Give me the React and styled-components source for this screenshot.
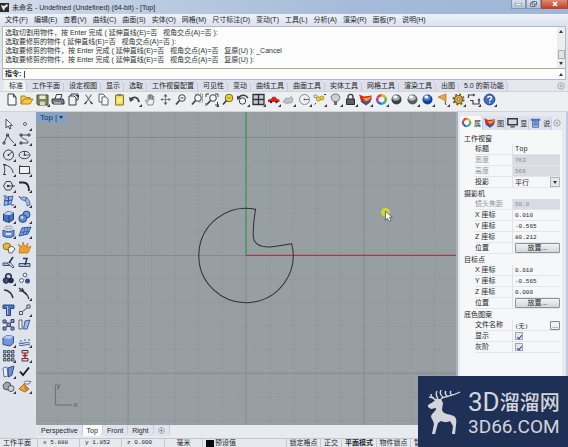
import React from "react";
import styled, { createGlobalStyle, css } from "styled-components";

const GlobalStyle = createGlobalStyle`
  * { box-sizing: border-box; }
  html, body { margin: 0; height: 100%; overflow: hidden; }
  body, button, input, select {
    font-family: "Liberation Sans", "Noto Sans CJK SC", sans-serif;
    font-size: 7px;
    color: #23262c;
  }
  button, input, select { margin: 0; padding: 0; border: 0; background: none; border-radius: 0; outline: 0; }
  svg { display: block; }
`;

const mono = css`
  font-family: "Liberation Mono", "Noto Sans CJK SC", monospace;
`;

const Window = styled.div`
  position: relative;
  height: 100vh;
  display: flex;
  flex-direction: column;
  background: #dfe4ec;
  overflow: hidden;
`;

/* title bar */
const TitleBar = styled.header`
  display: flex;
  flex: none;
  height: 14px;
  background: linear-gradient(90deg, #d3dcea 0, #b9c9e0 30%, #a5bbd9 62%, #9fb5d6 100%);
`;
const Title = styled.h1`
  display: flex;
  align-items: center;
  gap: 2px;
  flex: 1;
  margin: 0;
  font-size: 7px;
  line-height: 13px;
  font-weight: 400;
  white-space: pre;
`;
const WindowButton = styled.button`
  width: ${(p) => (p.$close ? 27 : 15)}px;
  height: 9px;
  display: grid;
  place-items: center;
  border: 1px solid ${(p) => (p.$close ? "#a4503f" : "#8595ae")};
  border-top: 0;
  background: ${(p) => (p.$close ? "linear-gradient(#e08a72, #c5402a)" : "linear-gradient(#d6e0ee, #b2c2d8)")};
`;

/* menu */
const MenuBar = styled.nav`
  display: flex;
  flex: none;
  gap: 6px;
  height: 12px;
  padding: 0 5px;
  background: linear-gradient(#eef1f7, #dbe1ee);
`;
const MenuItem = styled.button`
  line-height: 12px;
  white-space: nowrap;
`;

/* command area */
const CommandArea = styled.section`
  flex: none;
  margin: 0 2px;
  border: 1px solid #b4bac4;
  background: #fcfdfc;
`;
const History = styled.div`
  display: flex;
  height: 42px;
  border-bottom: 1px solid #a8aa92;
`;
const Lines = styled.ol`
  flex: 1;
  margin: 0;
  padding: 1px 0 0 2px;
  list-style: none;
  line-height: 9px;
  white-space: pre;
  color: #303336;
`;
const Scrollbar = styled.div`
  width: 8px;
  display: flex;
  flex-direction: column;
  justify-content: space-between;
  align-items: center;
  background: #eceeee;
`;
const ScrollButton = styled.button`
  display: grid;
  place-items: center;
  width: 8px;
  height: 9px;
`;
const Thumb = styled.div`
  width: 7px;
  height: 9px;
  margin-top: auto;
  border: 1px solid #aab0b4;
  background: #e1e4e6;
`;
const Prompt = styled.label`
  display: flex;
  align-items: center;
  height: 10px;
  padding-left: 2px;
  line-height: 10px;
  font-weight: 700;
`;
const Caret = styled.i`
  width: 1px;
  height: 7px;
  margin-left: 3px;
  background: #444;
`;
const PromptInput = styled.input`
  flex: 1;
  min-width: 0;
  height: 9px;
`;

/* toolbar */
const ToolTabs = styled.div`
  display: flex;
  flex: none;
  align-items: flex-end;
  height: 12px;
  padding: 0 2px 0 4px;
  border-bottom: 1px solid #d0d3dc;
  background: #e4e7ee;
`;
const ToolTab = styled.button`
  height: 11px;
  padding: 0 3px 0 5px;
  line-height: 11px;
  white-space: nowrap;
  border-right: 1px solid #c6cad6;
  border-radius: 2px 5px 0 0;
  background: ${(p) => (p.$active ? "#f2f3f4" : "#dde0ea")};
`;
const TabOptions = styled.button`
  margin-left: auto;
  width: 10px;
  height: 10px;
  display: grid;
  place-items: center;
`;
const Toolbar = styled.div`
  flex: none;
  height: 20px;
  padding: 1px 5px;
  border-bottom: 1px solid #cfd3da;
  background: #eeeff1;
`;
const ToolRow = styled.div`
  display: flex;
  justify-content: space-between;
  max-width: 492px;
`;
const IconButton = styled.button`
  width: 14px;
  height: 14px;
`;

/* work area */
const Body = styled.div`
  display: flex;
  flex: 1;
  min-height: 0;
`;
const Palette = styled.div`
  display: grid;
  flex: none;
  grid-template-columns: 14px 14px;
  column-gap: 2px;
  align-content: space-between;
  max-height: 282px;
  width: 36px;
  padding: 5px 3px 0 2px;
`;
const Center = styled.main`
  display: flex;
  flex: 1;
  min-width: 0;
  flex-direction: column;
`;
const Viewport = styled.div`
  position: relative;
  flex: 1;
  min-height: 0;
  overflow: hidden;
  background: #989fa3;
`;
const ViewLabel = styled.button`
  position: absolute;
  top: 0;
  left: 0;
  display: flex;
  align-items: center;
  gap: 2px;
  height: 11px;
  padding: 0 3px 0 4px;
  font-size: 8px;
  color: #1c3458;
  background: #83a1c4;
`;
const Scene = styled.svg`
  width: 100%;
  height: 100%;
`;
const ViewTabs = styled.div`
  display: flex;
  flex: none;
  align-items: flex-start;
  height: 13px;
  padding-left: 1px;
  background: #e7eaf0;
`;
const ViewTab = styled.button`
  height: 11px;
  padding: 0 4px;
  line-height: 11px;
  border-right: 1px solid #c9cedc;
  border-radius: 0 0 4px 2px;
  background: ${(p) => (p.$active ? "#fbfcfc" : "#e0e3ed")};
`;

/* properties panel */
const Panel = styled.aside`
  flex: none;
  width: 112px;
  padding: 4px 4px 0 2px;
  border-left: 2px solid #a9b3c0;
  border-right: 2px solid #bccbe0;
  background: #e6e9ef;
`;
const PanelTabs = styled.div`
  display: flex;
  align-items: center;
  height: 14px;
`;
const PanelTab = styled.button`
  display: flex;
  align-items: center;
  gap: 1px;
  height: 14px;
  width: 24px;
  padding-left: 1px;
  border-right: 1px solid #c9cedc;
  border-radius: 2px 4px 0 0;
  background: ${(p) => (p.$active ? "#f7f8f8" : "#dde1ea")};
`;
const Sheet = styled.div`
  height: calc(100% - 14px);
  padding: 3px 2px 0 4px;
  background: #f6f7f8;
`;
const Group = styled.fieldset`
  min-width: 0;
  margin: 0;
  padding: 0;
  border: 0;
`;
const GroupTitle = styled.legend`
  height: 11px;
  padding: 0;
  line-height: 11px;
`;
const Row = styled.label`
  display: grid;
  grid-template-columns: 37px 1fr;
  height: 11px;
  margin-left: 11px;
  line-height: 10px;
  border-bottom: 1px solid #e3e5e8;
  color: ${(p) => (p.$muted ? "#93979e" : "#23262c")};
`;
const Value = styled.span`
  display: flex;
  align-items: center;
  min-width: 0;
  padding-left: 2px;
  border-left: 1px solid #e0e2e6;
  background: ${(p) => (p.$muted ? "#d9dbe3" : "transparent")};
`;
const Field = styled.input`
  ${mono}
  flex: 1;
  width: 0;
  height: 10px;
  font-size: ${(p) => (p.$wide ? 7 : 6)}px;
  &:disabled { color: #858991; }
`;
const Select = styled.select`
  appearance: none;
  flex: 1;
  height: 10px;
`;
const SelectArrow = styled.span`
  display: grid;
  place-items: center;
  width: 10px;
  height: 10px;
  border: 1px solid #b3b7bc;
  background: #e6e7e9;
`;
const PlaceButton = styled.button`
  flex: 1;
  height: 10px;
  line-height: 8px;
  border: 1px solid #8f9398;
  border-radius: 1px;
  background: linear-gradient(#f2f3f3, #d3d5d7);
`;
const MoreButton = styled.button`
  width: 10px;
  height: 9px;
  line-height: 5px;
  border: 1px solid #80858a;
  border-radius: 1px;
  background: #f0f1f2;
`;
const Check = styled.input`
  appearance: none;
  width: 8px;
  height: 8px;
  display: grid;
  place-items: center;
  border: 1px solid #a0a5b4;
  background: #e4e6f0;
  &:checked::after {
    content: "";
    width: 2px;
    height: 4px;
    border: solid #3c4480;
    border-width: 0 1px 1px 0;
    transform: rotate(40deg);
  }
`;

/* status bar */
const StatusBar = styled.footer`
  display: grid;
  flex: none;
  grid-template-columns: 38px 42px 42px 43px 38px 84px 34px 21px 35px 34px 1fr;
  height: 9px;
  overflow: hidden;
  border-top: 1px solid #c3c8d0;
  background: #e6e9ee;
  white-space: nowrap;
`;
const Status = styled.div`
  display: flex;
  align-items: center;
  justify-content: ${(p) => (p.$indent ? "flex-start" : "center")};
  gap: 1px;
  padding-left: ${(p) => p.$indent || 0}px;
  line-height: 8px;
  font-weight: ${(p) => (p.$bold ? 700 : 400)};
  border-right: 1px solid #c4c9d2;
`;
const Coordinate = styled.span`
  ${mono}
  font-size: 6px;
`;
const Swatch = styled.i`
  width: 8px;
  height: 7px;
  background: #08090a;
`;

/* brand badge */
const Badge = styled.div`
  position: absolute;
  right: 0;
  bottom: 0;
  display: flex;
  gap: 7px;
  width: 150px;
  height: 71px;
  padding: 14px 8px 0 9px;
  color: #d3d5da;
  background: #1f3057;
`;
const BrandText = styled.div`
  display: flex;
  flex-direction: column;
  gap: 5px;
  white-space: nowrap;
`;
const BrandName = styled.div`
  display: flex;
  align-items: center;
  height: 24px;
  font: 400 26px/24px Roboto, sans-serif;
`;
const BrandHan = styled.span`
  font: 500 20px/24px "Noto Sans CJK SC", sans-serif;
`;
const BrandSite = styled.div`
  font: 400 19px/16px Roboto, sans-serif;
`;

const K = "#3b3f45";
const B = "#3d63b4";
const L = "#9fb8e6";
const Y = "#e9b93a";

const magnifier = (
  <>
    <circle cx="8" cy="5" r="3.3" fill="#f4f6f8" stroke={K} />
    <path d="M5.5 7.5 2 11.5" stroke={K} strokeWidth="1.6" />
  </>
);

const sphere = (dark, mid) => (
  <>
    <circle cx="6.5" cy="6.5" r="5" fill={dark} />
    <ellipse cx="6" cy="5" rx="3.7" ry="2.8" fill={mid} />
    <ellipse cx="5.4" cy="4" rx="2" ry="1.4" fill="#fff" />
  </>
);

const colorWheel = (
  <g strokeWidth="2.4" fill="none">
    <path d="M6.5 2.2A4.3 4.3 0 0 1 10.2 4.3" stroke="#e6b020" />
    <path d="M10.2 4.3A4.3 4.3 0 0 1 10.2 8.6" stroke="#67b43c" />
    <path d="M10.2 8.6A4.3 4.3 0 0 1 6.5 10.8" stroke="#2ba8b0" />
    <path d="M6.5 10.8A4.3 4.3 0 0 1 2.8 8.6" stroke="#3458c8" />
    <path d="M2.8 8.6A4.3 4.3 0 0 1 2.8 4.3" stroke="#a8409c" />
    <path d="M2.8 4.3A4.3 4.3 0 0 1 6.5 2.2" stroke="#d8402c" />
  </g>
);

const layers = (
  <>
    <path d="M1 3.500 6 7 13 5 11 9.500 7 12.500 2 9Z" fill="#31569f" />
    <path d="M0 1.500 5 3.500 13 2.500 11.500 7 7 10 2 7Z" fill="#d5301e" />
    <path d="M4 5 8 5 12 3.500 10.500 6.500 7 8.500Z" fill="#f0a13a" />
  </>
);

const icons = {
  new: <path d="M3 1H8.5L11 4V12H3Z M8.5 1V4H11" fill="#fbfcfc" stroke={K} />,
  open: (
    <>
      <path d="M1 11V3H5L6 4.5H10V6" fill="#f3cf5c" stroke="#aa7c1c" />
      <path d="M1 11 4 6H13L10 11Z" fill="#f8c93a" stroke="#b4821c" />
    </>
  ),
  save: (
    <>
      <path d="M1 2H12V12H2L1 11Z" fill="#7f8458" stroke="#4d5136" />
      <path d="M3.5 2.5H9.5V6H3.5Z" fill="#e9ecd9" />
      <path d="M4 8.5H9V12H4Z" fill="#d2d7d9" />
    </>
  ),
  print: (
    <>
      <path d="M4 6 5.5 1.5H11L9.5 6" fill="#f5f6f6" stroke={K} />
      <path d="M1 6H12L13 8V11H2L1 9Z" fill="#777c82" stroke="#33373c" />
      <path d="M3 10H10" stroke="#dfe2e4" />
    </>
  ),
  exportDoc: (
    <>
      <path d="M2 3H7L9 5V12H2Z" fill="#f2f3f4" stroke={K} />
      <path d="M4 3V1H11V7H9" fill="none" stroke={K} />
      <path d="M8 2H12V5Z" fill={K} />
    </>
  ),
  cut: (
    <>
      <path d="M3.5 1.5 9 9.5M9.5 1.5 4 9.5" stroke="#70767e" strokeWidth="1.2" />
      <path d="M2.5 11 4.5 9M8.5 9 10.500 11" stroke={K} strokeWidth="1.600" />
    </>
  ),
  copy: (
    <>
      <path d="M2 1H6L8 3V9H2Z" fill="#f7f8f8" stroke="#62666c" />
      <path d="M5 4H9L11 6V12H5Z" fill="#f7f8f8" stroke="#62666c" />
    </>
  ),
  paste: (
    <>
      <path d="M2.5 2H10.5V12H2.5Z" fill="#f1dc56" stroke="#85741c" />
      <path d="M4.5 1H8.5V3H4.5Z" fill="#74787c" />
      <path d="M4.5 5H8.5V10H4.5Z" fill="#f8ec9c" />
    </>
  ),
  undo: (
    <>
      <path d="M3 6C6 3 10 4 11 9" fill="none" stroke={K} strokeWidth="1.8" />
      <path d="M1 4 2 9 6 6.5Z" fill={K} />
    </>
  ),
  pan: <path d="M4 12 1.5 7.5 2.5 7 4 8.5V2.5H5.3V6.5 1.5H6.8V6.5 2H8.3V7 3.5H9.8V9L8.5 12Z" fill="#f0f1f2" stroke="#696e74" strokeWidth=".8" />,
  orbit: (
    <>
      <path d="M6.5 1V12M2 6.5H11" stroke="#7b8086" />
      <path d="M4.5 3.5 6.5 1 8.5 3.5ZM4.5 9.5 6.5 12 8.5 9.5ZM3.5 5 1.5 6.5 3.5 8ZM9.5 5 12 6.5 9.5 8Z" fill="#5a5f66" />
    </>
  ),
  zoom: <>{magnifier}<path d="M6.5 5H9.5" stroke={K} /></>,
  zoomWindow: <>{magnifier}<path d="M5 1H12.5V9H9" fill="none" stroke="#74797f" strokeDasharray="1.5 1" /></>,
  zoomExtents: <>{magnifier}<path d="M1 4V1H4M10 1H13V4M1 10V13M10 12H12.5V9" fill="none" stroke={K} /></>,
  zoomSelected: (
    <>
      <circle cx="8" cy="5" r="3.8" fill="#f0d438" stroke="#6e672c" />
      <path d="M5.5 7.5 2 11.5" stroke={K} strokeWidth="1.7" />
      <path d="M6 5H10" stroke="#a08818" />
    </>
  ),
  undoView: (
    <>
      <circle cx="6.5" cy="8" r="3.2" fill="#f5f6f7" stroke={K} />
      <path d="M3 4C6 1 10 2 12 5" fill="none" stroke={K} strokeWidth="1.4" />
      <path d="M1 2.5V7L5 5Z" fill={K} />
    </>
  ),
  fourView: (
    <>
      <path d="M1 1.5H12V11.5H1Z" fill="#c7cbcf" stroke="#303439" strokeWidth="1.3" />
      <path d="M6.5 1V12M1 6.5H12" stroke="#303439" strokeWidth="1.3" />
    </>
  ),
  car: (
    <>
      <path d="M1 6.5 4 6 5.5 3.8H8.5L10 6 12.5 6.5V9H1Z" fill="#cf2a22" />
      <circle cx="4" cy="9" r="1.2" fill="#501c1c" />
      <circle cx="9.5" cy="9" r="1.2" fill="#501c1c" />
    </>
  ),
  cloud: <path d="M1 9 4 5 7 5.5 9 3.5 11 6 10 9.5 5 10.5Z" fill="#bfc2c7" stroke="#8d9197" strokeWidth=".7" />,
  cplane: (
    <>
      <circle cx="6.5" cy="6.5" r="5" fill="#f0f1f2" stroke="#85898e" />
      <path d="M6.5 6.5H11" stroke="#686d73" />
      <circle cx="6.5" cy="6.5" r="1" fill="#6c7177" />
    </>
  ),
  points: (
    <>
      <path d="M1 2H4V4.5H1Z" fill="none" stroke="#7c8086" strokeWidth=".7" />
      <circle cx="5.5" cy="6" r="2.2" fill="#f0cd35" stroke="#9a8425" strokeWidth=".7" />
      <circle cx="9" cy="5" r="2" fill="#f0cd35" stroke="#9a8425" strokeWidth=".7" />
      <path d="M1.5 11.5 3 10M11 1.5H13" stroke={K} />
    </>
  ),
  bulb: (
    <>
      <path d="M4.5 8.5C0 4 3 1 6.5 1S13 4 8.5 8.5Z" fill="#cdd1d5" stroke="#6c7177" />
      <path d="M5 9H8V12H5Z" fill="#666b71" />
    </>
  ),
  lock: (
    <>
      <path d="M4 6V4C4 .5 9 .5 9 4V6" fill="none" stroke="#3e4247" strokeWidth="1.4" />
      <path d="M2.5 6H10.5V11.5H2.5Z" fill="#5c6167" stroke="#2b2e32" />
    </>
  ),
  layers,
  colorWheel,
  shade: sphere("#3c3f43", "#a7abb0"),
  render: sphere("#575b60", "#b8bbc0"),
  renderBlue: sphere("#153f94", "#4a7ed3"),
  spotlight: (
    <>
      <path d="M2 4 10 1V9L8 7Z" fill="#eda648" stroke="#ab6e28" strokeWidth=".7" />
      <path d="M9 9 10 12" stroke={K} />
    </>
  ),
  gear: (
    <>
      <circle cx="6.5" cy="6.5" r="4" fill="#e0b64a" stroke="#75591c" strokeWidth="1.2" />
      <circle cx="6.5" cy="6.5" r="5.3" fill="none" stroke="#75591c" strokeWidth="1.5" strokeDasharray="2 2.16" />
      <circle cx="6.5" cy="6.5" r="1.5" fill="#f1f1ec" stroke="#75591c" />
    </>
  ),
  dimension: (
    <>
      <path d="M1.5 5V2H7M3 7.5H6V11H12V6.5" fill="none" stroke={K} strokeWidth="1.2" />
      <path d="M6 .5 8.5 2 6 3.5ZM10.5 7.5 12 5 13.5 7.5Z" fill={K} />
    </>
  ),
  help: (
    <>
      <circle cx="6.5" cy="6.5" r="5.4" fill="#426bc2" stroke="#25417e" />
      <path d="M4.7 5C4.7 2.8 8.5 2.8 8.5 5 8.5 6.5 6.6 6.2 6.6 8" fill="none" stroke="#fff" strokeWidth="1.4" />
      <path d="M6 9H7.3V10.3H6Z" fill="#fff" />
    </>
  ),
  pointer: <path d="M4 2V11L6.2 9 7.8 12 9 11.3 7.6 8.5H10.3Z" fill="#f7f8fa" stroke={K} strokeWidth=".9" />,
  point: <circle cx="7" cy="7" r="1.5" fill="#f7f8fa" stroke={K} strokeWidth=".8" />,
  polyline: <path d="M2 11 5.500 3 9 8 12 11M1 10H3V12H1ZM4.500 2H6.500V4H4.500Z" fill="none" stroke={K} strokeWidth=".9" />,
  curve: <path d="M3 3H11M3 3C3 8 10 6 10 11M2 11H10M2 2H4V4H2ZM10 2H12V4H10ZM2 10H4V12H2Z" fill="none" stroke={K} strokeWidth=".9" />,
  circle: (
    <>
      <circle cx="6.5" cy="7" r="5" fill="none" stroke={K} />
      <path d="M6.5 7 10.5 3.5" stroke={K} />
      <circle cx="6.5" cy="7" r="1" fill={K} />
    </>
  ),
  ellipse: (
    <>
      <ellipse cx="6.5" cy="7" rx="5.5" ry="3.7" fill="none" stroke={K} />
      <path d="M6.5 3V7H11" stroke={K} strokeWidth=".8" />
      <circle cx="6.5" cy="7" r="1" fill={K} />
    </>
  ),
  arc: <path d="M2 11.500C3 8 3 5 2 2C7 2 11 6 11 10M1 1.5H4M1 11.5H4" fill="none" stroke={K} />,
  rectangle: <path d="M1.5 3.5H11.5V10.5H1.5ZM1 3H3M10.5 10H12.5" fill="#edf0f4" stroke={K} />,
  polygon: (
    <>
      <path d="M4 2.5H8.5L11 7 8.5 11H4L1.5 7Z" fill="none" stroke={K} />
      <path d="M6 7H13" stroke={K} />
      <circle cx="6" cy="7" r="1.3" fill={K} />
    </>
  ),
  fillet: <path d="M1 3.5H5C9 3.5 11 6 11 12" fill="none" stroke="#26292e" strokeWidth="1.8" />,
  surface: <><path d="M3 3.5 11 2 9 10 2 11.5Z" fill={L} stroke={B} /><path d="M6.5 2.5 6 11M2.5 7 10 6M1.5 2H4.5M9 11H12" stroke="#27427f" /></>,
  patch: <><path d="M2 4C8 1 12 5 12 11L9 12C9 8 7 6 4 6Z" fill={L} stroke="#5474aa" /><path d="M2 4 1 2M9 3 7 7" stroke="#51565e" /></>,
  box: <><path d="M1.5 4 6 1.5 11.5 3V9.5L7 12.5 1.5 10.5Z" fill="#4a6fbd" stroke="#203f80" /><path d="M1.5 4 6 1.5 11.5 3 7 5.3Z" fill="#c5d5f1" /><path d="M7 5.3V12" stroke="#203f80" /></>,
  union: <><circle cx="8.5" cy="4.5" r="3.5" fill="#7898d8" stroke="#294a90" /><circle cx="4.8" cy="8.5" r="3.9" fill="#6488d0" stroke="#294a90" /><circle cx="4" cy="7.5" r="1.4" fill="#c8d8f4" /></>,
  extrude: <><ellipse cx="6.5" cy="2.5" rx="4" ry="1.4" fill="none" stroke="#9298a2" /><path d="M1 5C4 7 9 7 12 5V11C9 13 4 13 1 11Z" fill="#6f92d4" stroke="#34549b" /><path d="M4 8H9V10H4Z" fill="#d9e4f7" /></>,
  mesh: <><path d="M4 3 13 2 10 9 1 11Z" fill="#86a3df" stroke="#30549f" /><path d="M7 3 5 10M10 2.5 8 9.5M2.5 7.5 11.5 6" stroke="#30549f" strokeWidth=".8" /></>,
  join: <><path d="M1 4 4 2 8 3 8 6 6 9 2 8Z" fill={Y} stroke="#94711f" /><path d="M6 7 10 5 13 8 10 12H7Z" fill="#f1f2f1" stroke="#6b6048" /></>,
  explode: <path d="M1 12 2 6 0 3 4 6 5 1 7 6 10 2 9 7 13 5 10 12Z" fill="#f0a12c" stroke="#b56b18" strokeWidth=".7" />,
  trim: <><path d="M1 7H8V9.500H1Z" fill="#a9b9d8" stroke="#3d5375" /><path d="M5 7 11 12 12 11 8 6" fill="#dce3ef" stroke="#3d5375" /><path d="M11 1 7 7" stroke="#273450" strokeWidth="1.600" /></>,
  split: <><path d="M1 7.500H12V10.500H1Z" fill="#a9b9d8" stroke="#3d5375" /><path d="M5 2.500H9L7 9" fill="none" stroke="#273450" strokeWidth="1.500" /></>,
  group: <><circle cx="6.5" cy="4.5" r="2.8" fill="#c4cce0" stroke="#27334f" strokeWidth="1.5" /><circle cx="4" cy="8.5" r="2.8" fill="#404e78" stroke="#1b2440" /><circle cx="9" cy="8.5" r="2.8" fill="#232c4c" /></>,
  ungroup: <><circle cx="7" cy="3" r="1.9" fill="#f2f4f8" stroke="#55617d" /><circle cx="3.5" cy="8.5" r="2" fill="#f2f4f8" stroke="#55617d" /><circle cx="9.500" cy="9" r="2.500" fill="#394d8c" /></>,
  extend: <path d="M2 3C6 3 10 6 11 11" fill="none" stroke="#2b2e33" strokeWidth="1.5" />,
  blend: <path d="M1 4C6 3 9 6 11 12M4 1 6 5M1 1 9 8" fill="none" stroke="#2b2e33" strokeWidth="1.2" />,
  text: <><path d="M1 2H12V5.5H8.5V12.5H4.5V5.5H1Z" fill="#5173b7" stroke="#294a87" /><path d="M5.5 3V11.5" stroke="#a9c0e9" /></>,
  move: <path d="M1.5 8.5H4.5V11.5H1.5ZM9 2H12V5H9ZM4.5 8.5 9 5" fill="#eceff4" stroke="#474c54" />,
  array: <path d="M1 2H4V5H1ZM9 1.5H12V4.5H9ZM1 9H4V12H1ZM9 9H12V12H9ZM5 5H8.5V8.5H5ZM4 4 5 5M8.5 5 10 4M4 9 5 8.5M8.5 8.5 9 9" fill="#859ac8" stroke="#37466a" />,
  twist: <><path d="M1 2H4V11H1Z" fill="#f1f3f6" stroke="#5a6270" /><path d="M7 3 12 2 9 11H5.5Z" fill="#a6bbe4" stroke="#3e5b9b" /></>,
  solid: <><path d="M1 4 5 1.5 11.5 2.5V9L8 12 1 10.5Z" fill="#7396db" stroke="#315095" /><path d="M1 4 5 1.5 11.5 2.5 8 5Z" fill="#bccff1" /></>,
  contour: <path d="M1 9C4 11 7 7 12 9M1 11C5 13 8 9 12 11M3 8V6M7 7V5M11 7V5" fill="none" stroke="#506fa9" strokeWidth="1.2" />,
  gridArray: <path d="M1.5 1.5H4V4H1.5ZM5.5 1.5H8V4H5.5ZM9.5 1.5H12V4H9.5ZM1.5 5.5H4V8H1.5ZM5.5 5.5H8V8H5.5ZM9.5 5.5H12V8H9.5ZM1.5 9.5H4V12H1.5ZM5.5 9.5H8V12H5.5ZM9.5 9.5H12V12H9.5Z" fill="#b5c0d6" stroke="#3b4354" strokeWidth=".9" />,
  flow: <><path d="M4 1.5H10V4H4ZM4 9.5H10V12H4Z" fill="#d7dce5" stroke="#5a3136" /><path d="M7 4V10M4.5 6.5H9.5" stroke="#bf2b2d" strokeWidth="1.6" /></>,
  unroll: <><path d="M1 3 5 2 6 11 2 12Z" fill="#ebeff7" stroke="#6275a0" /><path d="M6 3 12 1 10 10 6.5 12Z" fill="#6e8fd3" stroke="#334f8e" /></>,
  check: <path d="M2 6.5 5 10 11 2.5" fill="none" stroke="#18191b" strokeWidth="1.9" />,
  boolean: <><path d="M1 5 4 2 8 3 9 7 6 10 2 9Z" fill="#a4a8ad" stroke="#4f5459" /><circle cx="9" cy="8.5" r="3" fill="#cdd0d3" stroke="#4f5459" /></>,
  pyramid: <><path d="M1 9 6 4 11 9 7 12Z" fill="#eda93c" stroke="#a56c1f" /><path d="M6 4 7 12 11 9Z" fill="#c9842b" /><path d="M6 2.5 8 1 13 1.5 11 4H7Z" fill="#f0f2f0" stroke="#535a58" strokeWidth=".8" /></>,
  monitor: <><path d="M1 2H12V9H1Z" fill="#d7dadd" stroke="#34383d" strokeWidth="1.6" /><path d="M4 11.5H9" stroke="#34383d" strokeWidth="1.4" /></>,
  book: <><path d="M1 2H12V4.5H1Z" fill="#4673c6" /><path d="M3 5H10V12H3Z" fill="#9db8e6" stroke="#4769ad" /><path d="M4 7H9M4 9H9" stroke="#3c5da4" /></>,
};

const Icon = ({ name, flyout, size = 14 }) => (
  <svg width={size} height={size} viewBox="0 0 14 14" fill="none" aria-hidden="true">
    {icons[name]}
    {flyout && <path d="M14 11V14H11Z" fill="#34373b" />}
  </svg>
);

const GearDot = () => (
  <svg width="8" height="8" viewBox="0 0 8 8" fill="none" stroke="#a3a8af" aria-hidden="true">
    <circle cx="4" cy="4" r="3.2" />
    <circle cx="4" cy="4" r="1" />
  </svg>
);

const Arrow = ({ up }) => (
  <svg width="4" height="3" viewBox="0 0 4 3" aria-hidden="true">
    <path d={up ? "M0 3 2 0 4 3Z" : "M0 0H4L2 3Z"} fill="#33373c" />
  </svg>
);

const menus = ["文件(F)", "编辑(E)", "查看(V)", "曲线(C)", "曲面(S)", "实体(O)", "网格(M)", "尺寸标注(D)", "变动(T)", "工具(L)", "分析(A)", "渲染(R)", "面板(P)", "说明(H)"];

const history = [
  "选取切割用物件，按 Enter 完成 ( 延伸直线(E)=否   视角交点(A)=否 ):",
  "选取要修剪的物件 ( 延伸直线(E)=否   视角交点(A)=否 ):",
  "选取要修剪的物件，按 Enter 完成 ( 延伸直线(E)=否   视角交点(A)=否   复原(U) ): _Cancel",
  "选取要修剪的物件，按 Enter 完成 ( 延伸直线(E)=否   视角交点(A)=否   复原(U) ):",
];

const toolTabs = ["标准", "工作平面", "设定视图", "显示", "选取", "工作视窗配置", "可见性", "变动", "曲线工具", "曲面工具", "实体工具", "网格工具", "渲染工具", "出图", "5.0 的新功能"];

const toolbar = [
  ["new"], ["open"], ["save", 1], ["print"], ["exportDoc"], ["cut"], ["copy"], ["paste"],
  ["undo", 1], ["pan"], ["orbit"], ["zoom"], ["zoomWindow"], ["zoomExtents", 1], ["zoomSelected"],
  ["undoView", 1], ["fourView", 1], ["car", 1], ["cloud", 1], ["cplane", 1], ["points", 1],
  ["bulb", 1], ["lock", 1], ["layers", 1], ["colorWheel", 1], ["shade"], ["render", 1], ["renderBlue", 1],
  ["spotlight", 1], ["gear", 1], ["dimension", 1], ["help", 1],
];

const palette = [
  ["pointer"], ["point", 1], ["polyline", 1], ["curve", 1], ["circle", 1], ["ellipse", 1],
  ["arc", 1], ["rectangle", 1], ["polygon", 1], ["fillet", 1], ["surface", 1], ["patch", 1],
  ["box", 1], ["union", 1], ["extrude", 1], ["mesh", 1], ["join"], ["explode"],
  ["trim"], ["split"], ["group", 1], ["ungroup"], ["extend"], ["blend", 1],
  ["text"], ["move", 1], ["array"], ["twist"], ["solid", 1], ["contour", 1],
  ["gridArray", 1], ["flow", 1], ["unroll", 1], ["check"], ["boolean", 1], ["pyramid", 1],
];

const coordinates = (x, y, z) => [
  { label: "X 座标", value: x },
  { label: "Y 座标", value: y },
  { label: "Z 座标", value: z },
  { label: "位置", kind: "place" },
];

const groups = [
  {
    title: "工作视窗",
    rows: [
      { label: "标题", value: "Top", wide: true },
      { label: "宽度", value: "763", muted: true },
      { label: "高度", value: "566", muted: true },
      { label: "投影", value: "平行", kind: "select" },
    ],
  },
  {
    title: "摄影机",
    rows: [{ label: "镜头焦距", value: "50.0", muted: true }, ...coordinates("0.010", "-0.565", "80.212")],
  },
  { title: "目标点", rows: coordinates("0.010", "-0.565", "0.000") },
  {
    title: "底色图案",
    rows: [
      { label: "文件名称", value: "(无)", kind: "file" },
      { label: "显示", kind: "check" },
      { label: "灰阶", kind: "check" },
    ],
  },
];

const panelTabs = [
  ["colorWheel", "属"],
  ["layers", "图"],
  ["monitor", "显"],
  ["book", "说"],
];

function PropertyControl({ kind, value, muted, wide }) {
  if (kind === "place") return <PlaceButton type="button">放置...</PlaceButton>;
  if (kind === "check") return <Check type="checkbox" defaultChecked />;
  if (kind === "select")
    return (
      <>
        <Select defaultValue={value}><option>{value}</option></Select>
        <SelectArrow><Arrow /></SelectArrow>
      </>
    );
  return (
    <>
      <Field defaultValue={value} disabled={muted} $wide={wide} />
      {kind === "file" && <MoreButton type="button">...</MoreButton>}
    </>
  );
}

const GRID = 23.5;
const steps = Array.from({ length: 41 }, (_, i) => i - 20);

function ModelScene() {
  return (
    <Scene viewBox="-210 -143 420 312" preserveAspectRatio="xMidYMid slice" role="img" aria-label="Top">
      {steps.map((n) => {
        const major = n % 5 === 0;
        const line = {
          stroke: major ? "#838b90" : "#8b9297",
          strokeWidth: major ? 1 : 0.7,
          strokeDasharray: major ? undefined : "2 2",
        };
        return (
          <g key={n}>
            <path d={`M${n * GRID} -500V500`} {...line} />
            <path d={`M-500 ${n * GRID}H500`} {...line} />
          </g>
        );
      })}
      <path d="M0 0V-500" stroke="#3f9a50" strokeWidth="1.2" />
      <path d="M0 0H500" stroke="#a03c4b" strokeWidth="1.2" />
      <path
        d="M9.5 -46C7.5 -34 7 -26 7.3 -19C8 -10 15 -8 24 -8.4C33 -9.5 40 -11 45.5 -11.7A47 47 0 1 1 9.5 -46Z"
        fill="none"
        stroke="#2b3037"
      />
      <path d="M-190 129V149H-173" fill="none" stroke="#697176" />
      <text x="-189" y="132" fontSize="8" fill="#596167">y</text>
      <text x="-172" y="151" fontSize="8" fill="#596167">x</text>
      <circle cx="139" cy="-43" r="4.5" fill="#cdd53a" />
      <path d="M139 -44V-35L141 -37 143 -34 144.5 -35 143 -38H146Z" fill="#fff" stroke="#4b5055" strokeWidth=".8" />
    </Scene>
  );
}

function Deer() {
  return (
    <svg width="34" height="45" viewBox="0 0 34 45" aria-hidden="true">
      <path
        d="M9 9 6 12 1 15 1 17 4 19 9 18C10 21 4 23 4 27L6 31 7 34 5 44 8 44 11 33 14 31C18 33 21 32 23 31L26 36 25 44 28 44 29 35C30 29 29 26 24 25C19 24 16 23 15 20L16 13 14 9Z"
        fill="#d3d5da"
      />
      <path
        d="M10 10C6 9 4 7 4 4M7 8 2 7M11 9C9 6 9 3 10 1M14 9C16 6 22 8 33 2M16 7C13 5 13 2 14 0M20 6C18 4 18 2 19 1M25 5C23 4 23 2 24 1"
        fill="none"
        stroke="#d3d5da"
        strokeWidth="1.4"
      />
    </svg>
  );
}

export default function App() {
  return (
    <Window>
      <GlobalStyle />
      <TitleBar>
        <Title>
          <svg width="10" height="11" viewBox="0 0 10 11" aria-hidden="true">
            <path d="M0 1H9V10H0Z" fill="#292e2c" />
            <path d="M1 3 4 4 7 2 8 4 5 6 4 9 2 6Z" fill="#e6e8df" />
          </svg>
          未命名 - Undefined (Undefined) (64-bit) - [Top]
        </Title>
        <WindowButton type="button" aria-label="最小化">
          <svg width="7" height="3" viewBox="0 0 7 3"><path d="M0 0H7V3H0Z" fill="#f7f9fb" stroke="#647186" /></svg>
        </WindowButton>
        <WindowButton type="button" aria-label="还原">
          <svg width="7" height="6" viewBox="0 0 7 6" fill="#f7f9fb" stroke="#647186"><path d="M2 .5H6.5V4H2ZM.5 2H5V5.5H.5Z" /></svg>
        </WindowButton>
        <WindowButton type="button" aria-label="关闭" $close>
          <svg width="6" height="6" viewBox="0 0 6 6"><path d="M1 1 5 5M5 1 1 5" stroke="#fff" strokeWidth="1.5" /></svg>
        </WindowButton>
      </TitleBar>

      <MenuBar>
        {menus.map((m) => <MenuItem type="button" key={m}>{m}</MenuItem>)}
      </MenuBar>

      <CommandArea>
        <History>
          <Lines>{history.map((h, i) => <li key={i}>{h}</li>)}</Lines>
          <Scrollbar>
            <ScrollButton type="button" aria-label="向上"><Arrow up /></ScrollButton>
            <Thumb />
            <ScrollButton type="button" aria-label="向下"><Arrow /></ScrollButton>
          </Scrollbar>
        </History>
        <Prompt>
          指令:
          <Caret />
          <PromptInput type="text" />
          <ScrollButton type="button" aria-label="记录"><Arrow up /></ScrollButton>
        </Prompt>
      </CommandArea>

      <ToolTabs>
        {toolTabs.map((t, i) => <ToolTab type="button" key={t} $active={i === 0}>{t}</ToolTab>)}
        <TabOptions type="button" aria-label="工具列选项"><GearDot /></TabOptions>
      </ToolTabs>
      <Toolbar>
        <ToolRow>
          {toolbar.map(([name, flyout]) => (
            <IconButton type="button" key={name} aria-label={name}><Icon name={name} flyout={flyout} /></IconButton>
          ))}
        </ToolRow>
      </Toolbar>

      <Body>
        <Palette>
          {palette.map(([name, flyout]) => (
            <IconButton type="button" key={name} aria-label={name}><Icon name={name} flyout={flyout} /></IconButton>
          ))}
        </Palette>
        <Center>
          <Viewport>
            <ModelScene />
            <ViewLabel type="button">Top <span>|</span><Arrow /></ViewLabel>
          </Viewport>
          <ViewTabs>
            {["Perspective", "Top", "Front", "Right"].map((t) => (
              <ViewTab type="button" key={t} $active={t === "Top"}>{t}</ViewTab>
            ))}
            <ViewTab type="button" aria-label="新增">
              <svg width="7" height="7" viewBox="0 0 7 7" stroke="#9096a2" fill="none"><path d="M3.5 0 7 3.5 3.5 7 0 3.5ZM3.5 2V5M2 3.5H5" /></svg>
            </ViewTab>
          </ViewTabs>
        </Center>
        <Panel>
          <PanelTabs>
            {panelTabs.map(([icon, label], i) => (
              <PanelTab type="button" key={label} $active={i === 0}><Icon name={icon} size={12} />{label}</PanelTab>
            ))}
            <TabOptions type="button" aria-label="面板选项"><GearDot /></TabOptions>
          </PanelTabs>
          <Sheet>
            {groups.map((g) => (
              <Group key={g.title}>
                <GroupTitle>{g.title}</GroupTitle>
                {g.rows.map((r) => (
                  <Row key={r.label} $muted={r.muted}>
                    {r.label}
                    <Value $muted={r.muted}><PropertyControl {...r} /></Value>
                  </Row>
                ))}
              </Group>
            ))}
          </Sheet>
        </Panel>
      </Body>

      <StatusBar>
        <Status $indent={3}>工作平面</Status>
        <Status $indent={5}><Coordinate>x 5.888</Coordinate></Status>
        <Status $indent={5}><Coordinate>y 1.852</Coordinate></Status>
        <Status $indent={5}><Coordinate>z 0.000</Coordinate></Status>
        <Status>毫米</Status>
        <Status $indent={3}><Swatch />预设值</Status>
        <Status>锁定格点</Status>
        <Status>正交</Status>
        <Status $bold>平面模式</Status>
        <Status>物件锁点</Status>
        <Status $indent={3}>智慧轨迹</Status>
      </StatusBar>

      <Badge>
        <Deer />
        <BrandText>
          <BrandName>3D<BrandHan>溜溜网</BrandHan></BrandName>
          <BrandSite>3D66.COM</BrandSite>
        </BrandText>
      </Badge>
    </Window>
  );
}
